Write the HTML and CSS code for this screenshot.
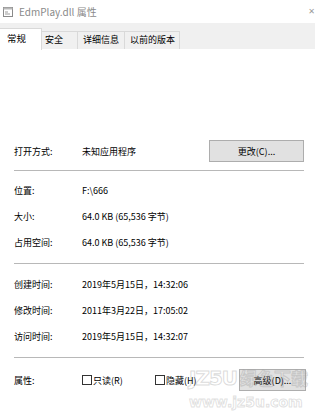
FILE: index.html
```html
<!DOCTYPE html>
<html lang="zh-CN">
<head>
    <meta charset="UTF-8">
    <title>EdmPlay.dll 属性</title>
    <link rel="stylesheet" href="styles.css">
</head>
<body>
<div class="dialog">
    <div class="titlebar">
        <svg class="ticon" width="10" height="10" viewBox="0 0 10 10">
            <rect x="0.5" y="0.5" width="9" height="9" fill="#fff" stroke="#8a8a8a"/>
            <rect x="0.5" y="0.5" width="9" height="2" fill="#b8b8b8"/>
            <path d="M2 5h3M2 7h5" stroke="#9a9a9a" stroke-width="1"/>
        </svg>
        <span class="title">EdmPlay.dll 属性</span>
        <span class="close">✕</span>
    </div>
    <ul class="tabs">
        <li class="active">常规</li>
        <li>安全</li>
        <li>详细信息</li>
        <li>以前的版本</li>
    </ul>
    <div class="page">
        <div class="row open">
            <span class="label">打开方式:</span>
            <span class="value">未知应用程序</span>
            <button class="btn change">更改(C)...</button>
        </div>
        <hr class="sep first">
        <div class="row"><span class="label">位置:</span><span class="value">F:\666</span></div>
        <div class="row"><span class="label">大小:</span><span class="value">64.0 KB (65,536 字节)</span></div>
        <div class="row"><span class="label">占用空间:</span><span class="value">64.0 KB (65,536 字节)</span></div>
        <hr class="sep">
        <div class="row"><span class="label">创建时间:</span><span class="value">2019年5月15日，14:32:06</span></div>
        <div class="row"><span class="label">修改时间:</span><span class="value">2011年3月22日，17:05:02</span></div>
        <div class="row"><span class="label">访问时间:</span><span class="value">2019年5月15日，14:32:07</span></div>
        <hr class="sep">
        <div class="row attrs">
            <span class="label">属性:</span>
            <label class="check ro"><span class="box"></span>只读(R)</label>
            <label class="check"><span class="box"></span>隐藏(H)</label>
            <button class="btn adv">高级(D)...</button>
        </div>
    </div>
    <div class="mark">
        <div class="big"><span class="latin">JZ5U</span>绿色下载</div>
        <div class="small">www.jz5u.com</div>
    </div>
</div>
</body>
</html>
```

FILE: styles.css
```css
* {
    margin: 0;
    padding: 0;
    box-sizing: border-box;
}

body {
    background: #fff;
    font-family: "Noto Sans CJK SC", "Microsoft YaHei", sans-serif;
    font-size: 9px;
    color: #000;
}

.dialog {
    width: 320px;
    height: 411px;
    position: relative;
    overflow: hidden;
}

.titlebar {
    height: 23px;
    display: flex;
    align-items: center;
    padding-left: 3px;
}

.ticon {
    margin-right: 6px;
}

.title {
    color: #8a8a8a;
    font-size: 10px;
}

.close {
    margin-left: auto;
    margin-right: 5px;
    color: #9a9a9a;
    font-size: 8px;
    font-family: "DejaVu Sans", sans-serif;
}

.tabs {
    list-style: none;
    width: 315px;
    height: 26px;
    background: #f0f0f0;
    display: flex;
    align-items: flex-end;
}

.tabs li {
    height: 18px;
    line-height: 16px;
    padding: 0 4px 0 3px;
    border: 1px solid #d9d9d9;
    border-left: none;
    border-bottom: none;
}

.tabs li.active {
    height: 22px;
    width: 42px;
    line-height: 18px;
    padding-left: 7px;
    background: #fff;
    margin-bottom: -1px;
    font-size: 9.5px;
}

.tabs li:nth-child(2) {
    width: 36px;
}

.tabs li:nth-child(3) {
    width: 47px;
    padding-left: 5px;
}

.tabs li:nth-child(4) {
    width: 55px;
    padding-left: 5px;
}

.page {
    padding: 91px 0 0 14px;
    width: 306px;
}

.row {
    height: 26px;
    display: flex;
    align-items: center;
}

.label {
    width: 68px;
}

.row.open,
.row.attrs {
    height: 22px;
}

.btn {
    font: inherit;
    height: 22px;
    background: #e1e1e1;
    border: 1px solid #adadad;
    color: #000;
}

.change {
    margin-left: auto;
    width: 95px;
    margin-right: 2px;
}

.adv {
    margin-left: auto;
    width: 67px;
}

.sep {
    border: none;
    border-top: 1px solid #b8b8b8;
    width: 290px;
    margin: 7px 0;
}

.sep.first {
    margin-top: 7px;
    margin-bottom: 6px;
}

.row + .sep {
    margin-top: 8px;
}

.sep + .attrs {
    margin-top: 11px;
}

.check {
    display: flex;
    align-items: center;
    width: 73px;
}

.box {
    width: 10px;
    height: 10px;
    border: 1px solid #333;
    margin-right: 1px;
    background: #fff;
}

.mark {
    position: absolute;
    left: 189px;
    top: 363px;
    pointer-events: none;
    white-space: nowrap;
    color: transparent;
    font-family: "DejaVu Sans", "Noto Sans CJK SC", sans-serif;
    font-weight: bold;
}

.mark .big {
    font-size: 17px;
    line-height: 30px;
    -webkit-text-stroke: 1px rgba(150, 150, 150, 0.35);
}

.mark .latin {
    font-size: 20px;
    letter-spacing: -1px;
    margin-right: 3px;
}

.mark .small {
    font-size: 14px;
    line-height: 16px;
    -webkit-text-stroke: 1px rgba(150, 150, 150, 0.3);
}
```
